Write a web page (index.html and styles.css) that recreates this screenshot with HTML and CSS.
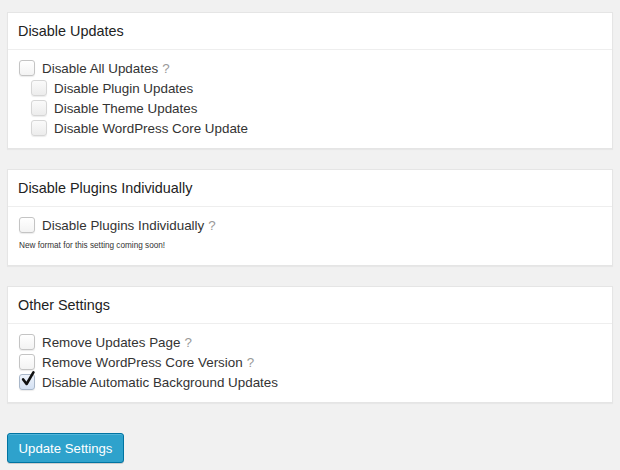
FILE: index.html
```html
<!DOCTYPE html>
<html lang="en">
<head>
    <meta charset="UTF-8">
    <title>Update Settings</title>
    <link rel="stylesheet" href="styles.css">
</head>
<body>
    <form class="settings">
        <div class="postbox">
            <h3 class="postbox-title">Disable Updates</h3>
            <div class="postbox-inside">
                <label class="option">
                    <span class="check"></span>
                    Disable All Updates <span class="help">?</span>
                </label>
                <label class="option sub">
                    <span class="check disabled"></span>
                    Disable Plugin Updates
                </label>
                <label class="option sub">
                    <span class="check disabled"></span>
                    Disable Theme Updates
                </label>
                <label class="option sub">
                    <span class="check disabled"></span>
                    Disable WordPress Core Update
                </label>
            </div>
        </div>

        <div class="postbox">
            <h3 class="postbox-title">Disable Plugins Individually</h3>
            <div class="postbox-inside">
                <label class="option">
                    <span class="check"></span>
                    Disable Plugins Individually <span class="help">?</span>
                </label>
                <p class="note">New format for this setting coming soon!</p>
            </div>
        </div>

        <div class="postbox">
            <h3 class="postbox-title">Other Settings</h3>
            <div class="postbox-inside">
                <label class="option">
                    <span class="check"></span>
                    Remove Updates Page <span class="help">?</span>
                </label>
                <label class="option">
                    <span class="check"></span>
                    Remove WordPress Core Version <span class="help">?</span>
                </label>
                <label class="option">
                    <span class="check checked">
                        <svg viewBox="0 0 16 16" width="16" height="16"><path d="M3.2 8.4 L6.6 13 L13.4 1.4" fill="none" stroke="#111" stroke-width="2.6" stroke-linecap="round" stroke-linejoin="round"/></svg>
                    </span>
                    Disable Automatic Background Updates
                </label>
            </div>
        </div>

        <button type="button" class="button-primary">Update Settings</button>
    </form>
</body>
</html>
```

FILE: styles.css
```css
body {
    margin: 0;
    padding: 12px 7px;
    background-color: #f1f1f1;
    color: #222;
    font-family: 'Liberation Sans', Arial, sans-serif;
}

.settings {
    display: flex;
    flex-direction: column;
    align-items: stretch;
}

.postbox {
    background-color: #fff;
    border: 1px solid #e5e5e5;
    box-shadow: 0 1px 1px rgba(0, 0, 0, 0.04);
    margin-bottom: 20px;
}

.postbox-title {
    margin: 0;
    padding: 0 10px;
    height: 36px;
    line-height: 36px;
    font-size: 14.4px;
    font-weight: normal;
    border-bottom: 1px solid #eee;
}

.postbox-inside {
    padding: 8px 11px 10px;
}

.option {
    display: flex;
    align-items: center;
    height: 20px;
    font-size: 13.4px;
    color: #333;
}

.option.sub {
    padding-left: 12px;
}

.check {
    position: relative;
    width: 14px;
    height: 14px;
    margin-right: 7px;
    border: 1px solid #c4c4c4;
    border-radius: 3px;
    background: linear-gradient(#fff, #f3f3f3);
    box-shadow: 0 1px 1px rgba(0, 0, 0, 0.08);
    flex-shrink: 0;
}

.check.disabled {
    border-color: #d6d6d6;
    background: linear-gradient(#fafafa, #ececec);
}

.check.checked {
    border-color: #a9b7c9;
    background: linear-gradient(#eef3fb, #d4e1f3);
}

.check svg {
    position: absolute;
    left: 0;
    top: -4px;
}

.help {
    margin-left: 4px;
    color: #999;
}

.note {
    margin: 5px 0 3px;
    font-size: 8.2px;
    line-height: 12px;
    color: #333;
}

.button-primary {
    align-self: flex-start;
    margin-top: 10px;
    width: 117px;
    height: 30px;
    padding: 0;
    background-color: #2ea2cc;
    border: 1px solid #0074a2;
    border-radius: 3px;
    box-shadow: inset 0 1px 0 rgba(120, 200, 230, 0.5), 0 1px 0 rgba(0, 0, 0, 0.15);
    color: #fff;
    font-family: 'Liberation Sans', Arial, sans-serif;
    font-size: 13.2px;
    cursor: pointer;
}
```
